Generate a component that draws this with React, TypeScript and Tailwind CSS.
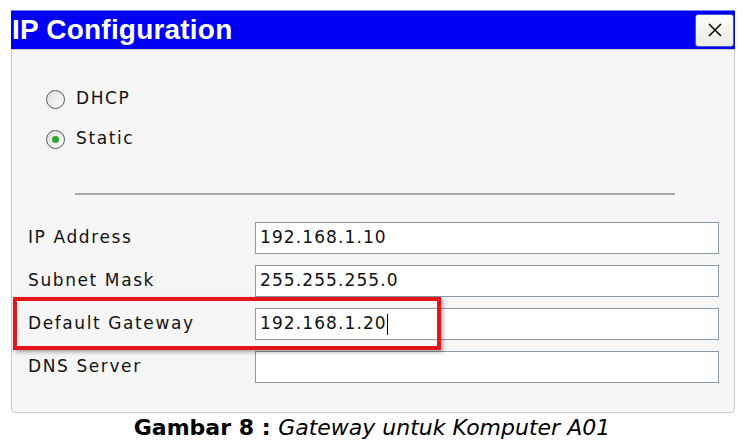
import React from 'react';

const fields = [
  { label: "IP Address", value: "192.168.1.10" },
  { label: "Subnet Mask", value: "255.255.255.0" },
  { label: "Default Gateway", value: "192.168.1.20", caret: true },
  { label: "DNS Server", value: "" },
];

const Radio = ({ checked }: { checked?: boolean }) => (
  <span className="w-[19px] h-[19px] rounded-full border-[1.5px] border-[#4a5a6a] bg-gradient-to-br from-[#dcdcd8] to-[#ffffff] flex items-center justify-center">
    {checked && <span className="w-[7px] h-[7px] rounded-full bg-[#2fa52f]" />}
  </span>
);

export default function App() {
  return (
    <div className="w-[744px] h-[444px] bg-white flex flex-col" style={{ fontFamily: '"DejaVu Sans", sans-serif' }}>
      <div className="ml-[11px] mt-[10px] w-[724px] relative">
        {/* Title bar */}
        <div className="h-[39px] bg-[#0000f2] border-t border-[#6f86ff] flex items-center justify-between pr-[1px]">
          <span className="pl-[1px] text-white text-[28px] font-bold leading-none tracking-[0.2px]" style={{ fontFamily: '"Liberation Sans", Arial, sans-serif' }}>
            IP Configuration
          </span>
          <button className="w-[39px] h-[33px] bg-gradient-to-b from-[#fbfbf9] to-[#ebebe6] border border-[#3c5ccc] rounded-[3px] flex items-center justify-center">
            <svg width="16" height="16" viewBox="0 0 16 16">
              <path d="M2 2 L14 14 M14 2 L2 14" stroke="#000" strokeWidth="1.5" />
            </svg>
          </button>
        </div>

        {/* Panel */}
        <div className="h-[364px] bg-[#f6f6f6] border border-[#c9c9c4] rounded-b-[4px] pl-[16px] pr-[15px] text-[#111] text-[17px]">
          <div className="pl-[18px] pt-[37px] flex flex-col gap-[16px]">
            <div className="h-[24px] flex items-center gap-[11px]">
              <Radio />
              <span className="tracking-[1.6px]">DHCP</span>
            </div>
            <div className="h-[24px] flex items-center gap-[11px]">
              <Radio checked />
              <span className="tracking-[1.6px]">Static</span>
            </div>
          </div>
          <div className="ml-[47px] w-[600px] h-[2px] bg-[#aaaaaa] mt-[42px]" />
          <div className="mt-[27px] flex flex-col gap-[11px]">
            {fields.map((f) => (
              <div key={f.label} className="h-[32px] flex items-center">
                <span className="w-[227px] tracking-[1.6px]">{f.label}</span>
                <div className="w-[464px] h-[32px] bg-white border border-[#8a99a8] flex items-center pl-[4px] tracking-[1.1px]">
                  <span>{f.value}</span>
                  {f.caret && <span className="w-[1px] h-[21px] bg-black" />}
                </div>
              </div>
            ))}
          </div>
        </div>

        {/* Highlight box */}
        <div className="absolute left-[2px] top-[287px] w-[428px] h-[53px] border-[4px] border-[#e3151a] shadow-[2px_2px_4px_rgba(0,0,0,0.35)]" />
      </div>

      <div className="mt-[2px] text-center text-[22px] leading-[26px] text-black">
        <span className="font-bold">Gambar 8 : </span>
        <span className="italic">Gateway untuk Komputer A01</span>
      </div>
    </div>
  );
}
